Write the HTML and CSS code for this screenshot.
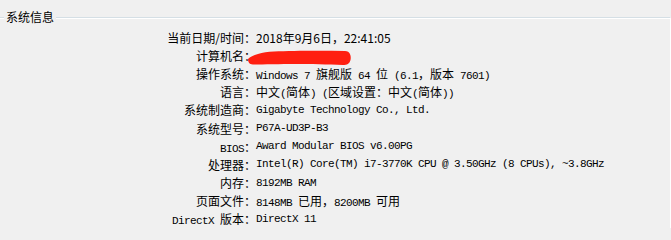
FILE: index.html
```html
<!DOCTYPE html>
<html lang="zh-CN">
<head>
  <meta charset="UTF-8">
  <title>系统信息</title>
  <link rel="stylesheet" href="styles.css">
</head>
<body>
  <fieldset class="group">
    <legend>系统信息</legend>
    <div class="info">
      <div class="label">当前日期/时间：</div>
      <div class="value cjk">2018年9月6日，22:41:05</div>

      <div class="label">计算机名：</div>
      <div class="value hidden">
        <!-- name scribbled out -->
        <svg class="scribble" width="104" height="18" viewBox="0 0 104 18">
          <path d="M0,11 C4,7 14,4 26,3.5 C44,2.8 70,2.5 97,3 C102,3 103.5,8 102.5,12 C101.5,16 99,17 95,17 C80,16.5 62,16 48,16 C32,16 16,16.5 5,16.5 C1,16.5 0,13.5 0,11 Z" fill="#ff1f10"/>
        </svg>
      </div>

      <div class="label">操作系统：</div>
      <div class="value">Windows 7 <span class="zh">旗舰版</span> 64 <span class="zh">位</span> (6.1<span class="zh">，版本</span> 7601)</div>

      <div class="label">语言：</div>
      <div class="value"><span class="zh">中文</span>(<span class="zh">简体</span>) (<span class="zh">区域设置：中文</span>(<span class="zh">简体</span>))</div>

      <div class="label">系统制造商：</div>
      <div class="value">Gigabyte Technology Co., Ltd.</div>

      <div class="label">系统型号：</div>
      <div class="value">P67A-UD3P-B3</div>

      <div class="label"><span class="en">BIOS</span>：</div>
      <div class="value">Award Modular BIOS v6.00PG</div>

      <div class="label">处理器：</div>
      <div class="value">Intel(R) Core(TM) i7-3770K CPU @ 3.50GHz (8 CPUs), ~3.8GHz</div>

      <div class="label">内存：</div>
      <div class="value">8192MB RAM</div>

      <div class="label">页面文件：</div>
      <div class="value">8148MB <span class="zh">已用，</span>8200MB <span class="zh">可用</span></div>

      <div class="label"><span class="en">DirectX </span>版本：</div>
      <div class="value">DirectX 11</div>
    </div>
  </fieldset>
</body>
</html>
```

FILE: styles.css
```css
body {
  margin: 0;
  background-color: #f0f0f0;
  color: #000;
  font-family: "Noto Sans CJK SC", sans-serif;
  font-size: 12px;
}
.group {
  margin: 9px 0 0 0;
  padding: 0;
  min-width: 0;
  border: none;
  border-top: 1px solid #d5dfe5;
  border-right: 1px solid #fff;
  box-shadow: inset 0 1px #fff;
}
.group legend {
  margin-left: 4px;
  padding: 0 2px;
  line-height: 16px;
  background-color: #f0f0f0;
}
.info {
  display: grid;
  grid-template-columns: 256px auto;
  grid-auto-rows: 18.2px;
  align-items: center;
  padding-top: 3px;
}
.label {
  text-align: right;
  white-space: nowrap;
}
.value {
  font-family: "Liberation Mono", monospace;
  font-size: 11px;
  letter-spacing: -0.6px;
  white-space: nowrap;
}
.value.cjk {
  font-family: "Noto Sans CJK SC", sans-serif;
  font-size: 12px;
  letter-spacing: 0;
}
.value.hidden {
  align-self: start;
}
.zh {
  font-family: "Noto Sans CJK SC", sans-serif;
  font-size: 12px;
  letter-spacing: 0;
}
.en {
  font-family: "Liberation Mono", monospace;
  font-size: 11px;
  letter-spacing: -0.6px;
}
.scribble {
  display: block;
  margin: 2px 0 0 -8px;
}
```
